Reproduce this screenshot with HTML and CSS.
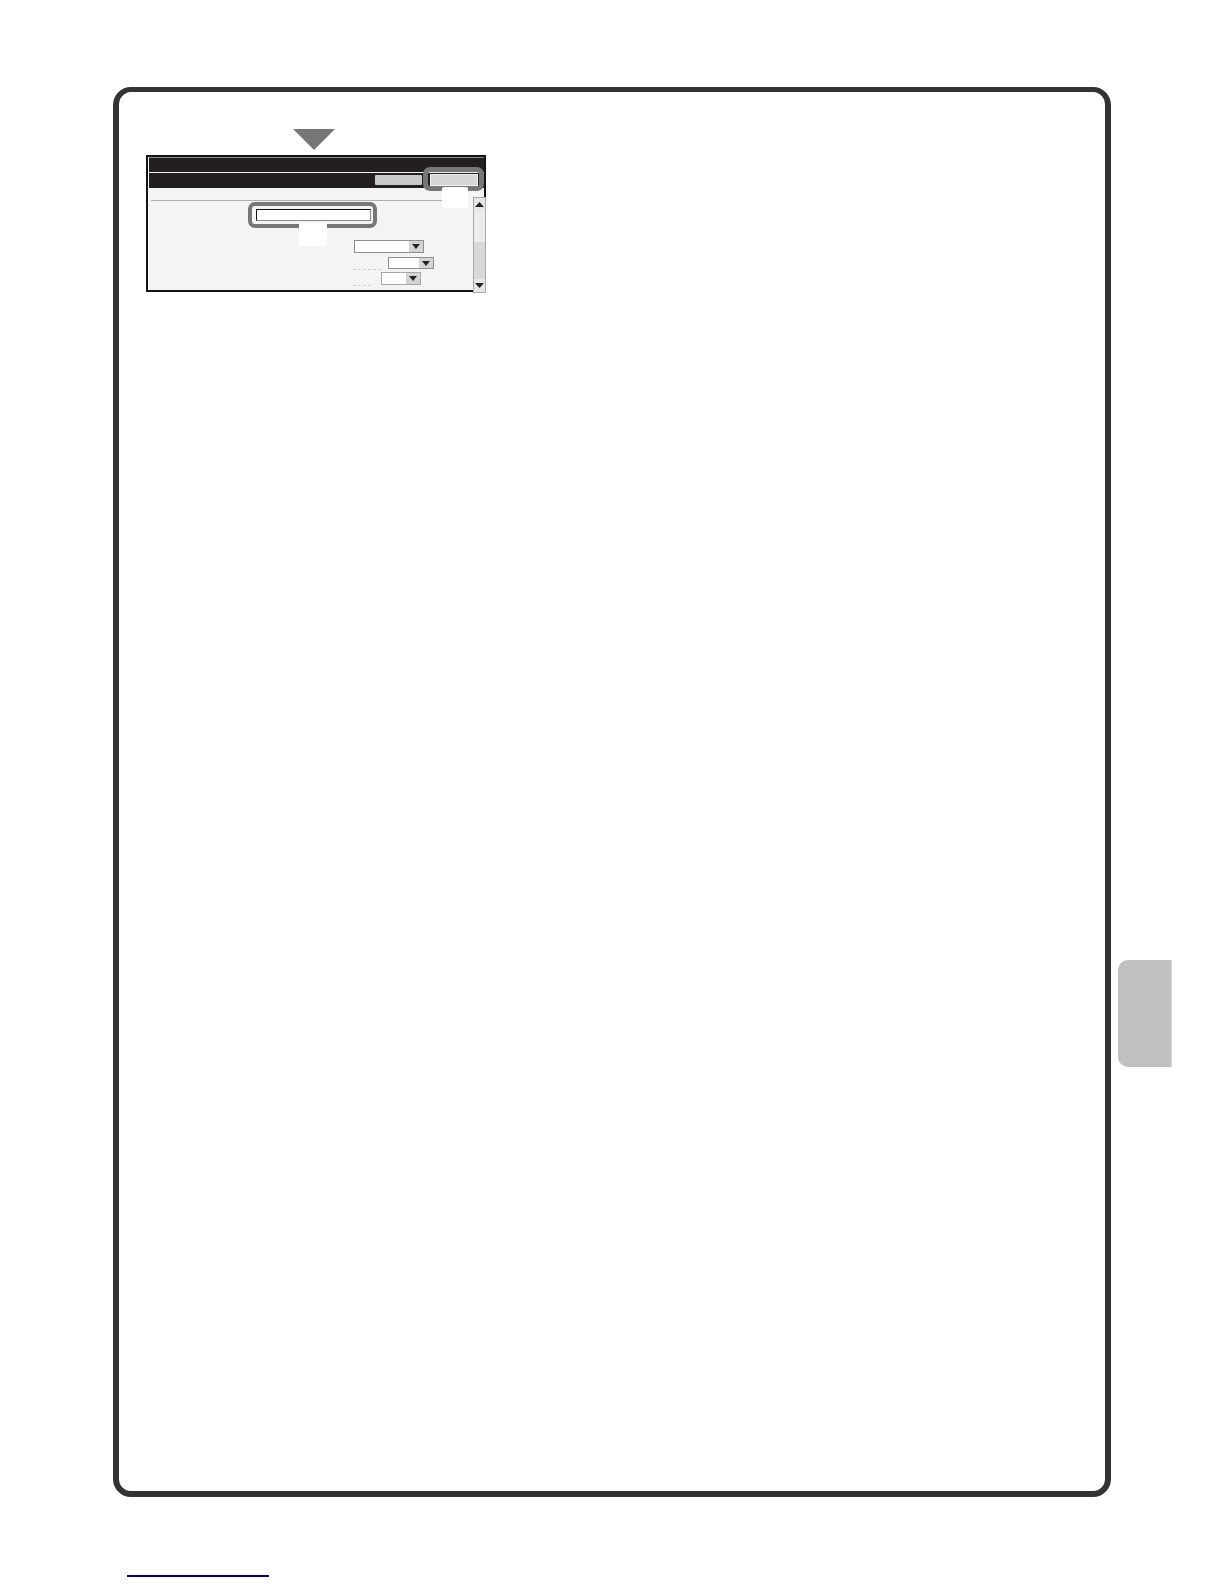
FILE: index.html
```html
<!DOCTYPE html>
<html lang="en">
<head>
<meta charset="utf-8">
<title>Screen</title>
<link rel="stylesheet" href="styles.css">
</head>
<body>
<div class="page">
  <div class="column">
    <main class="frame">
      <svg class="pointer" width="42" height="21" viewBox="0 0 42 21" aria-hidden="true"><path d="M0 0H42L21 21Z" fill="#777"/></svg>
      <section class="screen">
        <div class="bar bar-top"></div>
        <div class="bar bar-actions">
          <div class="btn btn-plain"></div>
          <div class="btn btn-marked">
            <span class="ring ring-btn"></span>
            <span class="patch patch-btn"></span>
          </div>
        </div>
        <div class="body">
          <div class="divider"></div>
          <div class="field">
            <span class="ring ring-field"></span>
            <span class="patch patch-field"></span>
          </div>
          <div class="row row-a">
            <div class="select select-a"><span class="select-btn"><svg width="8" height="5" viewBox="0 0 8 5" aria-hidden="true"><path d="M0 0H8L4 5Z" fill="#222"/></svg></span></div>
          </div>
          <div class="row row-b">
            <div class="select select-b"><span class="select-btn"><svg width="8" height="5" viewBox="0 0 8 5" aria-hidden="true"><path d="M0 0H8L4 5Z" fill="#222"/></svg></span></div>
          </div>
          <div class="row row-c">
            <span class="smudge smudge-long"></span>
            <div class="select select-c"><span class="select-btn"><svg width="8" height="5" viewBox="0 0 8 5" aria-hidden="true"><path d="M0 0H8L4 5Z" fill="#222"/></svg></span></div>
          </div>
          <span class="smudge smudge-short"></span>
        </div>
        <div class="scrollbar">
          <span class="scroll-btn"><svg width="9" height="5" viewBox="0 0 9 5" aria-hidden="true"><path d="M4.5 0L9 5H0Z" fill="#222"/></svg></span>
          <span class="scroll-track"></span>
          <span class="scroll-btn"><svg width="9" height="5" viewBox="0 0 9 5" aria-hidden="true"><path d="M0 0H9L4.500 5Z" fill="#222"/></svg></span>
        </div>
      </section>
    </main>
    <div class="footer-rule"></div>
  </div>
  <aside class="tab"></aside>
</div>
</body>
</html>
```
FILE: styles.css
```css
* { box-sizing: border-box; }
html, body { margin: 0; padding: 0; background: #fff; }
body { height: 1584px; overflow: hidden; font-family: "Liberation Sans", sans-serif; }

.page { display: flex; align-items: flex-start; padding: 87px 0 0 113px; }
.column { display: flex; flex-direction: column; }

.frame {
  width: 998px;
  height: 1410px;
  border: 6px solid #333;
  border-top-width: 5px;
  border-radius: 18px;
  padding: 37px 0 0 27px;
  display: flex;
  flex-direction: column;
  align-items: flex-start;
}
.pointer { display: block; margin-left: 147px; }

.screen {
  position: relative;
  width: 340px;
  height: 137px;
  margin-top: 5px;
  border: 2px solid #141414;
  background: #f4f4f4;
}

.bar { margin-left: 1px; background: #231f20; }
.bar-top { height: 15px; border-top: 1px solid #8a8a8a; }
.bar-actions {
  height: 15px;
  margin-top: 1px;
  padding: 1px 6px 0 0;
  display: flex;
  justify-content: flex-end;
  gap: 8px;
  align-items: flex-start;
}
.btn { position: relative; }
.btn-plain { width: 47px; height: 10px; margin-top: 1px; background: #c9c9c9; border-radius: 1px; }
.btn-marked { width: 48px; height: 12px; background: #d6d6d6; border: 1px solid #f2f2f2; }

.ring { position: absolute; border: 5px solid #777; border-radius: 7px; }
.ring-btn { top: -8px; left: -8px; right: -7px; bottom: -6px; }
.ring-field { top: -8px; left: -9px; right: -7px; bottom: -8px; border-width: 4px; }

.patch { position: absolute; background: #fff; border-radius: 2px; }
.patch-btn { top: 12px; left: 11px; width: 26px; height: 21px; }
.patch-field { top: 13px; left: 42px; width: 28px; height: 23px; }

.body { display: flex; flex-direction: column; align-items: flex-start; }
.divider { width: 291px; height: 1px; margin: 12px 0 0 3px; background: #b0b0b0; }
.field {
  position: relative;
  width: 115px;
  height: 12px;
  margin: 8px 0 0 108px;
  background: #fff;
  border: 1px solid #8a8a8a;
  border-top-color: #111;
  border-left-color: #111;
}

.row { display: flex; align-items: flex-start; }
.row-a { margin: 19px 0 0 206px; }
.row-b { margin: 4px 0 0 240px; }
.row-c { margin: 3px 0 0 205px; }

.select {
  height: 12px;
  display: flex;
  justify-content: flex-end;
  background: #fff;
  border: 1px solid #8f8f8f;
}
.select-a { width: 70px; height: 13px; }
.select-b { width: 46px; }
.select-c { width: 40px; height: 13px; border-color: #a8a8a8; }
.select-btn {
  width: 14px;
  display: flex;
  align-items: center;
  justify-content: center;
  background: #d4d4d4;
}

.smudge { display: block; height: 1px; border-top: 1px dashed #cfcfcf; }
.smudge-long { width: 28px; margin-top: -3px; }
.smudge-short { width: 18px; margin-left: 205px; margin-top: 0; }

.scrollbar {
  position: absolute;
  top: 40px;
  right: -2px;
  width: 13px;
  height: 96px;
  display: flex;
  flex-direction: column;
  background: #e4e4e4;
  border: 1px solid #a8a8a8;
}
.scroll-btn {
  height: 13px;
  display: flex;
  align-items: center;
  justify-content: center;
  background: #e6e6e6;
}
.scroll-track {
  flex: 1;
  background: linear-gradient(#ececec 0, #ececec 45%, #d8d8d8 45%, #d8d8d8 100%);
}

.footer-rule { width: 142px; height: 2px; margin: 78px 0 0 14px; background: #000099; }

.tab {
  width: 54px;
  height: 107px;
  margin: 873px 0 0 7px;
  background: #c0c0c0;
  border-right: 1px solid #d4d4d4;
  border-radius: 10px 0 0 10px;
}
```
